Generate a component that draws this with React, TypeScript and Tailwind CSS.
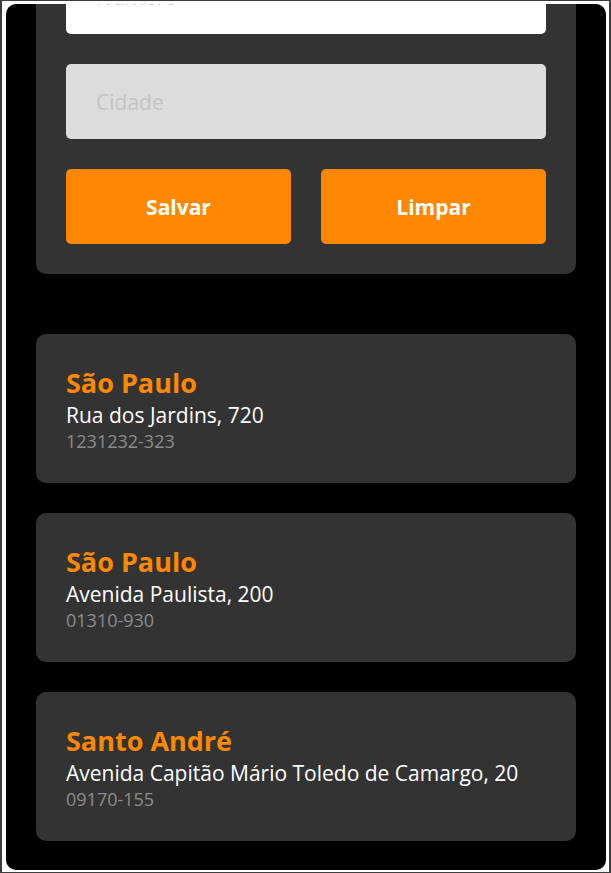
import React from 'react';

interface Endereco {
  id: number;
  cidade: string;
  rua: string;
  cep: string;
}

const enderecos: Endereco[] = [
  { id: 1, cidade: 'São Paulo', rua: 'Rua dos Jardins, 720', cep: '1231232-323' },
  { id: 2, cidade: 'São Paulo', rua: 'Avenida Paulista, 200', cep: '01310-930' },
  { id: 3, cidade: 'Santo André', rua: 'Avenida Capitão Mário Toledo de Camargo, 20', cep: '09170-155' },
];

const App = () => {
  return (
    <div
      className="h-[873px] w-full bg-white border-[#3c3c3c] border-t border-b border-l-2 border-r-2 pt-[3px] pb-[2px] pl-[4px] pr-[3px] flex flex-col"
      style={{ fontFamily: '"Open Sans", "Noto Sans", sans-serif' }}
    >
      <div className="flex-1 bg-black rounded-[10px] overflow-hidden px-[30px]">
        <form className="-mt-[75px] bg-[#333333] rounded-[10px] p-[30px] flex flex-col gap-[30px]">
          <input
            type="text"
            placeholder="Numero"
            className="h-[75px] w-full rounded-[5px] bg-white px-[30px] text-[21px] text-black placeholder:text-[#c8c8c8] outline-none"
          />
          <input
            type="text"
            placeholder="Cidade"
            readOnly
            className="h-[75px] w-full rounded-[5px] bg-[#dcdcdc] px-[30px] text-[21px] text-black placeholder:text-[#c3c3c3] outline-none"
          />
          <div className="grid grid-cols-2 gap-[30px]">
            <button type="button" className="h-[75px] pt-[2px] rounded-[5px] bg-[#ff8800] text-white text-[21px] font-bold">
              Salvar
            </button>
            <button type="button" className="h-[75px] pt-[2px] rounded-[5px] bg-[#ff8800] text-white text-[21px] font-bold">
              Limpar
            </button>
          </div>
        </form>

        <ul className="mt-[60px] flex flex-col gap-[30px]">
          {enderecos.map((e) => (
            <li key={e.id} className="h-[149px] bg-[#333333] rounded-[10px] px-[30px] pt-[30px] flex flex-col">
              <p className="text-[27px] leading-[37px] font-bold text-[#ff8800]">{e.cidade}</p>
              <p className="text-[21px] leading-[28px] text-white">{e.rua}</p>
              <p className="text-[18px] leading-[25px] text-[#8c8c8c]">{e.cep}</p>
            </li>
          ))}
        </ul>
      </div>
    </div>
  );
};

export default App;
